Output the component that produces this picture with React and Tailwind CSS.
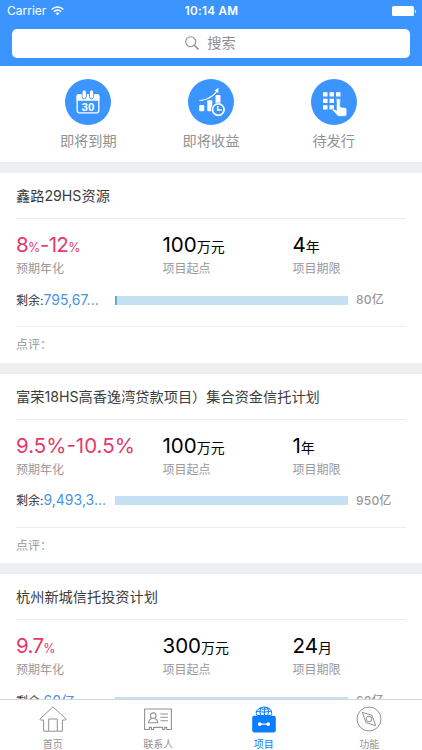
const FONT = "font-[Inter,'Noto_Sans_CJK_SC',sans-serif]";

const projects = [
  {
    title: '鑫路29HS资源',
    rate: [['8', 1], ['%', 0], ['-12', 1], ['%', 0]],
    start: '100', term: '4', unit: '年',
    left: '795,67...', total: '80亿', progress: 0.8, review: true,
  },
  {
    title: '富荣18HS高香逸湾贷款项目）集合资金信托计划',
    rate: [['9.5%-10.5%', 1]],
    start: '100', term: '1', unit: '年',
    left: '9,493,3...', total: '950亿', progress: 0, review: true,
  },
  {
    title: '杭州新城信托投资计划',
    rate: [['9.7', 1], ['%', 0]],
    start: '300', term: '24', unit: '月',
    left: '60亿', total: '60亿', progress: 0, review: false,
  },
];

function WifiIcon() {
  return (
    <svg width="13" height="10" viewBox="0 0 13 10" fill="none" stroke="#fff" strokeWidth="1.5">
      <path d="M0.7 3.5C4 0.3 9 0.3 12.3 3.5" />
      <path d="M2.8 5.8C5 3.8 8 3.8 10.2 5.8" />
      <path d="M4.4 7.2C5.6 6.1 7.4 6.1 8.6 7.2L6.5 9.3Z" fill="#fff" stroke="none" />
    </svg>
  );
}

function CalendarIcon() {
  return (
    <svg width="46" height="46" viewBox="0 0 46 46">
      <circle cx="23" cy="23" r="23" fill="#3c94ff" />
      <rect x="12.2" y="15.6" width="21.6" height="18.2" rx="2.2" fill="none" stroke="#fff" strokeWidth="1.3" />
      <path d="M11.6 21.7V17.2a2.2 2.2 0 0 1 2.2-2.2h18.4a2.2 2.2 0 0 1 2.2 2.2v4.5z" fill="#fff" />
      <rect x="17.1" y="10.9" width="4.2" height="8.8" rx="2.1" fill="#fff" stroke="#3c94ff" strokeWidth="0.9" />
      <rect x="24.5" y="10.9" width="4.2" height="8.8" rx="2.1" fill="#fff" stroke="#3c94ff" strokeWidth="0.9" />
      <text x="23" y="31.5" textAnchor="middle" fontSize="11.5" fontWeight="700" fontFamily="Liberation Sans" fill="#fff">30</text>
    </svg>
  );
}

function IncomeIcon() {
  return (
    <svg width="46" height="46" viewBox="0 0 46 46">
      <circle cx="23" cy="23" r="23" fill="#3c94ff" />
      <g fill="#fff">
        <rect x="11.2" y="26" width="5" height="6.3" rx="1" />
        <rect x="19.3" y="21.3" width="5" height="11" rx="1" />
        <rect x="27.5" y="16" width="5" height="11" rx="1" />
        <path d="M11.3 21.2C18 20.7 24.5 17.2 28.1 12.3L26.3 11.4L30.5 8.8L30.2 13.9L28.9 13C25 18.5 18.2 21.8 11.3 22Z" />
      </g>
      <circle cx="30.3" cy="30.6" r="7.2" fill="#3c94ff" />
      <circle cx="30.3" cy="30.6" r="5.8" fill="none" stroke="#fff" strokeWidth="1.7" />
      <path d="M29.7 27v4h4" fill="none" stroke="#fff" strokeWidth="1.5" />
    </svg>
  );
}

function IssueIcon() {
  return (
    <svg width="46" height="46" viewBox="0 0 46 46">
      <circle cx="23" cy="23" r="23" fill="#3c94ff" />
      <g fill="#fff">
        {[12, 18.5, 25].map((x) =>
          [13.2, 19.7, 26.2].map((y) => (
            <rect key={x + '-' + y} x={x} y={y} width="4.5" height="4.3" />
          ))
        )}
      </g>
      <path
        d="M25.4 21.3a1.9 1.9 0 0 1 3.8 0v6.5l5.3.9a1.6 1.6 0 0 1 1.4 1.7v4.4a2.6 2.6 0 0 1-2.6 2.6h-5.4c-1 0-1.6-.5-2.2-1.3l-4.2-4.7c-.9-1.2.4-2.2 1.6-1.5l2.3 1.5z"
        fill="#fff"
        stroke="#3c94ff"
        strokeWidth="0.8"
      />
    </svg>
  );
}

function HomeIcon() {
  return (
    <svg width="28" height="26" viewBox="0 0 28 26" fill="none" stroke="#929292" strokeWidth="1" strokeLinejoin="round">
      <path d="M14 .8L.8 13.2Q.7 14.6 4.6 14V25.2H23.4V14Q27.3 14.6 27.2 13.2Z" />
      <path d="M9.7 25V13H18.3V25" />
    </svg>
  );
}

function ContactIcon() {
  return (
    <svg width="28" height="23" viewBox="0 0 28 23" fill="none" stroke="#929292" strokeWidth="1.1">
      <path d="M.6 1H27.4V21.5H22.7V19.4H20.7V21.5H18.7V19.4H9.6V21.5H7.5V19.4H5.3V21.5H.6Z" />
      <circle cx="9.2" cy="7.7" r="2.8" />
      <path d="M7.8 10.4C6 11 4.7 12.3 4.7 14.8H13.7C13.7 12.3 12.4 11 10.6 10.4" />
      <path d="M16.4 6H24M16.4 9.3H24M16.4 12.8H24" />
    </svg>
  );
}

function ProjectIcon() {
  return (
    <svg width="24" height="27" viewBox="0 0 24 27" fill="none">
      <g stroke="#0a7cff" strokeWidth="1">
        <path d="M5.6 10.5Q3.7 7.8 4.3 5L8 2Q12 .2 16 1.7L19.3 4.7Q20.6 7.8 18.4 10.5" />
        <path d="M12.4 1V10.5M8.8 1.8Q6.4 6 9.3 10.5M15.5 1.6Q18 6 15.3 10.5M4.4 5.2Q12 7.3 19.7 5M6.9 2.6Q12 4 17.5 2.6" />
      </g>
      <path d="M2 9.7H4.8L6 8.9H18.2L19.4 9.7H22A2 2 0 0 1 23.8 11.7V24.6A1.8 1.8 0 0 1 22 26.4H2A1.8 1.8 0 0 1 .2 24.6V11.7A2 2 0 0 1 2 9.7Z" fill="#0a7cff" />
      <path d="M7.5 18.1H16.5" stroke="#fff" strokeWidth="1.2" />
      <circle cx="7.7" cy="18.1" r="1.9" fill="#fff" />
      <circle cx="16.3" cy="18.1" r="1.9" fill="#fff" />
    </svg>
  );
}

function CompassIcon() {
  return (
    <svg width="26" height="26" viewBox="0 0 26 26" fill="none" stroke="#929292" strokeWidth="1">
      <circle cx="13" cy="13" r="12" />
      <path d="M6.3 6.3L16 9.3L19.7 19.7L10 16.7Z" strokeLinejoin="round" />
      <circle cx="13" cy="13" r="2.8" />
    </svg>
  );
}

function Stat({ children, label, className }) {
  return (
    <div className={className}>
      <div className="h-[28px] leading-[28px] text-[20.5px] whitespace-nowrap">{children}</div>
      <div className="mt-px h-[18px] leading-[18px] text-[12px] text-[#999]">{label}</div>
    </div>
  );
}

function Card({ p }) {
  return (
    <section className="h-[189.5px] shrink-0 bg-white px-4 text-black">
      <h2 className="h-[45px] leading-[45px] text-[14.2px] text-[#3c3c3c] whitespace-nowrap">{p.title}</h2>
      <div className="h-px bg-[#ececec]" />
      <div className="flex pt-3">
        <Stat className="w-[146.5px] [&>div:first-child]:text-[#e5386b]" label="预期年化">
          {p.rate.map(([t, big], i) => (
            <span key={i} className={p.rate.length === 1 ? '' : big ? 'tracking-[-0.7px]' : 'text-[12.5px] tracking-[-0.3px]'}>{t}</span>
          ))}
        </Stat>
        <Stat className="w-[130px]" label="项目起点">
          {p.start}<span className="text-[14px]">万元</span>
        </Stat>
        <Stat label="项目期限">
          {p.term}<span className="text-[14px]">{p.unit}</span>
        </Stat>
      </div>
      <div className="mt-[12px] flex h-5 items-center leading-5">
        <div className="w-[99px] whitespace-nowrap text-[12px] text-[#333]">
          剩余:<span className="text-[14px] text-[#4b93e8]">{p.left}</span>
        </div>
        <div className="h-[9px] w-[233px] bg-[#c5e0f1]">
          <div className="h-full bg-[#66a9d4]" style={{ width: p.progress + '%' }} />
        </div>
        <div className="ml-2 text-[12px] font-medium tracking-[0.2px] text-[#999]">{p.total}</div>
      </div>
      {p.review && (
        <>
          <div className="mt-[16px] h-px bg-[#ececec]" />
          <div className="h-[35px] leading-[35px] text-[12px] text-[#999]">点评：</div>
        </>
      )}
    </section>
  );
}

function Shortcut({ icon, label }) {
  return (
    <div className="flex w-[122.7px] flex-col items-center">
      {icon}
      <span className="mt-[6px] h-5 text-[14.2px] leading-5 text-[#929292]">{label}</span>
    </div>
  );
}

function Tab({ icon, label, active }) {
  return (
    <div className="flex flex-1 flex-col items-center">
      <div className="flex h-[29px] items-center justify-center">{icon}</div>
      <span className={'mt-[5px] h-3 text-[10px] leading-3 ' + (active ? 'text-[#0a7cff]' : 'text-[#929292]')}>{label}</span>
    </div>
  );
}

export default function App() {
  return (
    <div className={'flex h-[750px] w-[422px] flex-col overflow-hidden bg-[#eeeff1] ' + FONT}>
      <header className="h-[66px] shrink-0 bg-[#3c94ff] text-white">
        <div className="flex h-[22px] items-center pr-[6px] pl-[7px] text-[11.5px]">
          <div className="flex flex-1 items-center gap-[5px]">
            <span className="text-[12px]">Carrier</span>
            <WifiIcon />
          </div>
          <span className="pt-[2px] text-[11.7px] font-semibold tracking-[0.3px]">10:14 AM</span>
          <div className="flex flex-1 items-center justify-end">
            <span className="h-[10px] w-[22px] rounded-[1.5px] bg-white" />
            <span className="ml-[0.5px] h-[3px] w-[1.5px] rounded-r bg-white" />
          </div>
        </div>
        <div className="mx-3 mt-[7px] flex h-[29px] w-[398px] items-center justify-center gap-[8px] rounded-[5px] bg-white pr-px text-[14.2px] text-[#8e8e93]">
          <svg className="mt-[-1px]" width="14" height="14" viewBox="0 0 14 14" fill="none" stroke="#8e8e93" strokeWidth="1.1">
            <circle cx="5.7" cy="5.7" r="5" />
            <path d="M9.3 9.3L13.5 13.4" strokeWidth="1.5" />
          </svg>
          <span className="mt-[-2px] leading-5">搜索</span>
        </div>
      </header>

      <nav className="flex h-[96px] shrink-0 justify-center bg-white pt-[13px]">
        <Shortcut icon={<CalendarIcon />} label="即将到期" />
        <Shortcut icon={<IncomeIcon />} label="即将收益" />
        <Shortcut icon={<IssueIcon />} label="待发行" />
      </nav>

      <main className="flex min-h-0 flex-1 flex-col gap-[11px] overflow-hidden pt-[11px]">
        {projects.map((p) => (
          <Card key={p.title} p={p} />
        ))}
      </main>

      <footer className="flex h-[51px] shrink-0 border-t border-[#d3d6da] bg-white pt-[5px]">
        <Tab icon={<HomeIcon />} label="首页" />
        <Tab icon={<ContactIcon />} label="联系人" />
        <Tab icon={<ProjectIcon />} label="项目" active />
        <Tab icon={<CompassIcon />} label="功能" />
      </footer>
    </div>
  );
}
